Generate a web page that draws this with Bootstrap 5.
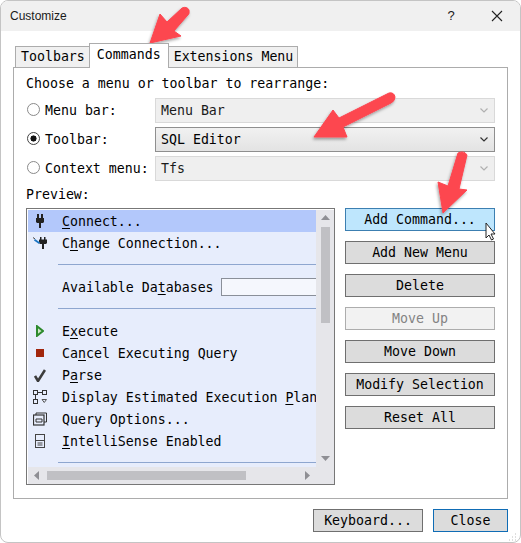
<!DOCTYPE html>
<html lang="en">
<head>
<meta charset="utf-8">
<title>Customize</title>
<link rel="stylesheet" href="https://cdn.jsdelivr.net/npm/bootstrap@5.3.0/dist/css/bootstrap.min.css">
<style>
html,body{margin:0;background:#fff;}
body{font:13.25px/20px "DejaVu Sans Mono","Liberation Mono",monospace;color:#000;overflow:hidden;}
.dlg{position:relative;width:521px;height:543px;border:1px solid #c4c4c4;border-radius:8px;overflow:hidden;background:#fff;}
.ttl{height:30px;background:#f0f0f0;padding:0 0 0 9px;font:12px/30px "Liberation Sans",sans-serif;color:#1a1a1a;}
.ttl-help{width:46px;text-align:center;font:13px/28px "Liberation Sans",sans-serif;}
.ttl-x{width:46px;}
.dlg-body{padding:12px 12px 0 12px;}
.tabs-x{--bs-nav-tabs-border-width:0;border:0;padding-left:2px;height:24px;align-items:flex-end;flex-wrap:nowrap;}
.tabs-x .nav-link{font-size:13.25px;line-height:19px;height:21px;padding:0 4px 0 5px;border:1px solid #acacac;border-bottom:0;border-radius:0;background:#f0f0f0;color:#000;margin:0;white-space:nowrap;}
.tabs-x .nav-link.active{height:25px;line-height:21px;background:#fff;color:#000;margin-bottom:-1px;position:relative;z-index:2;border:1px solid #acacac;border-bottom:0;padding:0 7px;}
.tabs-x .nav-item+.nav-item .nav-link{margin-left:-1px;}
.pane{border:1px solid #acacac;height:432px;width:495px;padding:6px 12px 0 12px;position:relative;}
.lbl-row{height:20px;line-height:20px;}
.rad-rows{margin-top:4px;gap:4px;}
.rad-row{height:25px;}
.rad-label{width:129px;flex:none;display:flex;align-items:center;padding-left:1px;}
.rad-label .form-check-input{width:13px;height:13px;margin:-2px 5px 0 0;flex:none;border:1px solid #8a8a8a;background-color:#fff;border-radius:50%;}
.rad-label .form-check-input:checked{background-color:#fff;border-color:#444;background-image:radial-gradient(circle,#111 0 2.800px,transparent 3.300px);}
.sel{width:340px;height:25px;border:1px solid #d9d9d9;border-radius:0;background:#efefef;padding:0 5px;font:13.25px/23px "DejaVu Sans Mono",monospace;color:#1a1a1a;display:flex;align-items:center;justify-content:space-between;}
.sel.on{border-color:#8f8f8f;background:linear-gradient(#f1f1f1,#e3e3e3);color:#000;}
.sel svg{margin-right:1px;}
.prev-lbl{margin-top:3px;height:24px;line-height:22px;}
.prev-row{gap:10px;}
.lst{width:309px;height:277px;border:1px solid #777;padding:1px;background:#fff;display:grid;grid-template-columns:288px 18px;grid-template-rows:257px 17px;flex:none;}
.lst-main{background:#e7edfc;overflow:hidden;}
.itm{height:22px;display:flex;align-items:center;white-space:nowrap;line-height:22px;}
.itm>span:not(.ico):not(.tbox){padding-top:2px;}
.itm.cur{background:#b3c8fb;}
.ico{width:24px;flex:none;display:flex;justify-content:center;margin-right:10px;}
.sepr{height:1px;background:#8ea6cf;margin:0 0 2px 30px;}
.sep-wrap{height:22px;display:flex;flex-direction:column;justify-content:center;}
.tbox{height:18px;width:100px;border:1px solid #8a8f99;background:#f5f7fd;margin-left:7px;flex:none;}
.u{text-decoration:underline;text-underline-offset:2px;text-decoration-thickness:1px;}
.sb-v,.sb-h{background:#e6e6ea;}
.sb-v{display:flex;flex-direction:column;align-items:center;}
.sb-v .up{margin-top:5px;height:5px;margin-bottom:7px;}
.thumb-v{width:9px;height:96px;background:#c0c0c4;}
.sb-v .dn{margin-top:auto;margin-bottom:6px;}
.sb-h{display:flex;align-items:center;grid-column:1/3;padding:0 0 0 6px;}
.thumb-h{width:199px;height:9px;background:#c0c0c4;margin-left:8px;}
.sb-h .rt{margin-left:59px;}
.cmds{width:150px;gap:10px;}
.cmd{height:23px;padding:0;border:1px solid #6f6f6f;border-radius:0;background:#dcdcdc;color:#000;font:13.25px/20px "DejaVu Sans Mono",monospace;width:100%;}
.cmd.hot{background:#bee6fd;border-color:#3c7fb1;}
.cmd.off,.cmd:disabled{background:#f2f2f2;border-color:#adadad;color:#838383;opacity:1;}
.foot{gap:10px;margin-top:10px;width:495px;}
.cmd.k{width:110px;}
.cmd.c{width:75px;border-color:#0f6cb5;}
.over{position:absolute;left:-1px;top:-1px;pointer-events:none;}
</style>
</head>
<body>
<div class="dlg">
  <div class="ttl d-flex justify-content-between align-items-center">
    <span>Customize</span>
    <span class="d-flex align-items-center">
      <span class="ttl-help">?</span>
      <span class="ttl-x d-flex justify-content-center"><svg width="12" height="12" viewBox="0 0 12 12"><path d="M1 1l10 10M11 1L1 11" stroke="#222" stroke-width="1.1" fill="none"/></svg></span>
    </span>
  </div>
  <div class="dlg-body">
    <ul class="nav nav-tabs tabs-x">
      <li class="nav-item"><a class="nav-link" href="#">Toolbars</a></li>
      <li class="nav-item"><a class="nav-link active" href="#">Commands</a></li>
      <li class="nav-item"><a class="nav-link" href="#">Extensions Menu</a></li>
    </ul>
    <div class="pane">
      <div class="lbl-row">Choose a menu or toolbar to rearrange:</div>
      <div class="d-flex flex-column rad-rows">
        <div class="d-flex align-items-center rad-row">
          <label class="rad-label"><input class="form-check-input" type="radio" name="r">Menu bar:</label>
          <div class="sel"><span>Menu Bar</span><svg width="8" height="5" viewBox="0 0 8 5"><path d="M.5.5L4 4 7.5.5" stroke="#b0b0b0" stroke-width="1.2" fill="none"/></svg></div>
        </div>
        <div class="d-flex align-items-center rad-row">
          <label class="rad-label"><input class="form-check-input" type="radio" name="r" checked>Toolbar:</label>
          <div class="sel on"><span>SQL Editor</span><svg width="8" height="5" viewBox="0 0 8 5"><path d="M.5.5L4 4 7.5.5" stroke="#333" stroke-width="1.2" fill="none"/></svg></div>
        </div>
        <div class="d-flex align-items-center rad-row">
          <label class="rad-label"><input class="form-check-input" type="radio" name="r">Context menu:</label>
          <div class="sel"><span>Tfs</span><svg width="8" height="5" viewBox="0 0 8 5"><path d="M.5.5L4 4 7.5.5" stroke="#b0b0b0" stroke-width="1.2" fill="none"/></svg></div>
        </div>
      </div>
      <div class="prev-lbl">Preview:</div>
      <div class="d-flex prev-row">
        <div class="lst">
          <div class="lst-main">
            <div class="itm cur"><span class="ico"><svg width="8" height="14" viewBox="0 0 8 14"><path d="M1 0h2v4H1zM5 0h2v4H5zM0 4h8v4l-1 1H5v5H3V9H1L0 8z" fill="#222"/></svg></span><span><span class="u">C</span>onnect...</span></div>
            <div class="itm"><span class="ico"><svg width="14" height="12" viewBox="0 0 14 12"><path d="M7 0h1.500v2.500H7zM11 0h1.500v2.500H11zM6 2.500h8V6l-1 1h-2v5H9V7H7L6 6z" fill="#222"/><path d="M2 2l5 3.500-1 1.500-5-3.500z" fill="#1b76c4"/><path d="M0 0.500l2 1.500" stroke="#444"/></svg></span><span>C<span class="u">h</span>ange Connection...</span></div>
            <div class="sep-wrap"><div class="sepr"></div></div>
            <div class="itm"><span class="ico"></span><span>Available Da<span class="u">t</span>abases</span><span class="tbox"></span></div>
            <div class="sep-wrap"><div class="sepr"></div></div>
            <div class="itm"><span class="ico"><svg width="8" height="12" viewBox="0 0 8 12"><path d="M1 1.200v9.600L7 6z" fill="#cfe8c6" stroke="#2d8a2d" stroke-width="2"/></svg></span><span>E<span class="u">x</span>ecute</span></div>
            <div class="itm"><span class="ico"><svg width="8" height="8"><rect width="8" height="8" fill="#a1260d"/></svg></span><span>Ca<span class="u">n</span>cel Executing Query</span></div>
            <div class="itm"><span class="ico"><svg width="12" height="13" viewBox="0 0 12 13"><path d="M1 7l3 5L11 1" fill="none" stroke="#3c3c3c" stroke-width="2.600"/></svg></span><span>P<span class="u">a</span>rse</span></div>
            <div class="itm"><span class="ico"><svg width="14" height="14" viewBox="0 0 14 14"><g fill="none" stroke="#333"><rect x=".5" y=".5" width="4" height="4"/><rect x="9.500" y=".5" width="4" height="4"/><rect x=".5" y="9.500" width="4" height="4"/><path d="M5 2.500h4M2.500 5v4"/><path d="M9 9.500h4.500l-2.250 3z" stroke="#555"/></g></svg></span><span>Display Estimated Execution <span class="u">P</span>lan</span></div>
            <div class="itm"><span class="ico"><svg width="14" height="14" viewBox="0 0 14 14"><g fill="none" stroke="#333"><path d="M3 3V1h10.500v9H11"/><rect x=".5" y="3" width="10.500" height="10" stroke-width="1.200"/><path d="M3 7h6v3H3z"/></g></svg></span><span>Query Options...</span></div>
            <div class="itm"><span class="ico"><svg width="10" height="14" viewBox="0 0 10 14"><g fill="none" stroke="#444"><rect x=".5" y=".5" width="9" height="13"/><path d="M.5 6.500h9M2.500 9h5M2.500 11h5"/></g></svg></span><span><span class="u">I</span>ntelliSense Enabled</span></div>
            <div class="sep-wrap"><div class="sepr"></div></div>
          </div>
          <div class="sb-v">
            <svg class="up" width="9" height="5" viewBox="0 0 9 5"><path d="M0 5L4.500 0 9 5z" fill="#8f8f94"/></svg>
            <div class="thumb-v"></div>
            <svg class="dn" width="9" height="5" viewBox="0 0 9 5"><path d="M0 0L4.500 5 9 0z" fill="#8f8f94"/></svg>
          </div>
          <div class="sb-h">
            <svg width="5" height="9" viewBox="0 0 5 9"><path d="M5 0L0 4.500 5 9z" fill="#8f8f94"/></svg>
            <div class="thumb-h"></div>
            <svg class="rt" width="5" height="9" viewBox="0 0 5 9"><path d="M0 0L5 4.500 0 9z" fill="#8f8f94"/></svg>
          </div>
        </div>
        <div class="d-flex flex-column cmds">
          <button class="btn cmd hot">Add Command...</button>
          <button class="btn cmd">Add New Menu</button>
          <button class="btn cmd">Delete</button>
          <button class="btn cmd off" disabled>Move Up</button>
          <button class="btn cmd">Move Down</button>
          <button class="btn cmd">Modify Selection</button>
          <button class="btn cmd">Reset All</button>
        </div>
      </div>
    </div>
    <div class="d-flex justify-content-end foot">
      <button class="btn cmd k">Keyboard...</button>
      <button class="btn cmd c">Close</button>
    </div>
  </div>
  <svg class="over" width="521" height="543" viewBox="0 0 521 543">
    <defs><filter id="ds" x="-30%" y="-30%" width="170%" height="170%"><feDropShadow dx="-1" dy="2" stdDeviation="1.500" flood-color="#000" flood-opacity=".35"/></filter></defs>
    <g fill="#fd4650" stroke="#fd4650" stroke-linejoin="round" stroke-width="1" filter="url(#ds)">
      <path d="M150 43L160 14 167 22 182 8Q187 6 189 10 190 14 187 16L174 31 181 36z"/>
      <path d="M314 137L333 110 339 118 389 93Q394 92 395 97 395 101 391 103L343 127 347 137z"/>
      <path d="M443 213L438 182 448 186 458 153Q464 150 467 155L459 189 467 190z"/>
    </g>
    <path d="M486 223v15l3-3 2.500 5 2-1-2.500-5h4z" fill="#fff" stroke="#222" stroke-width="1"/>
    <path d="M509 540h1M512 540h1M515 540h1M512 537h1M515 537h1M515 534h1" stroke="#bdbdbd"/>
  </svg>
</div>
<script src="https://cdn.jsdelivr.net/npm/bootstrap@5.3.0/dist/js/bootstrap.bundle.min.js"></script>
</body>
</html>
